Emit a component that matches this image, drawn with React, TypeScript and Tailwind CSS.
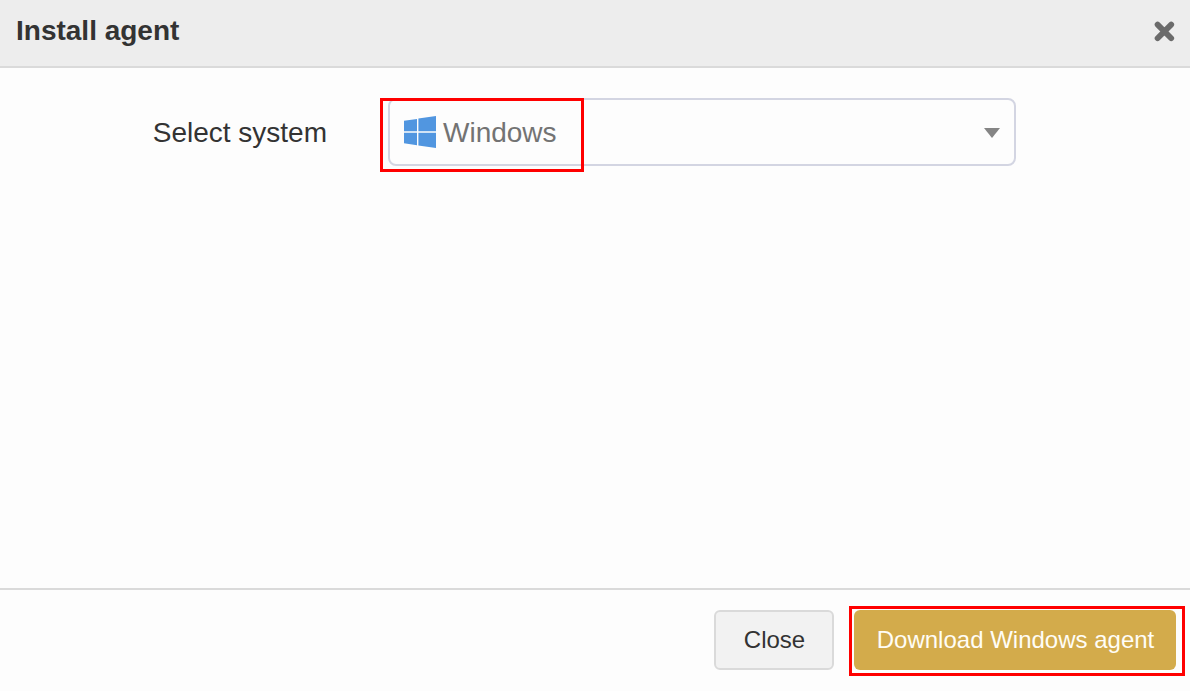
export default function App() {
  return (
    <div className="flex h-[691px] w-[1190px] flex-col overflow-hidden bg-[#fdfdfd] font-['Liberation_Sans',Arial,sans-serif] text-[#333333]">
      <header className="flex h-[68px] shrink-0 items-start justify-between border-b-2 border-[#dadada] bg-[#ededed] pl-4 pr-[15px]">
        <h1 className="pt-[15px] text-[28px] leading-[32px] font-bold">Install agent</h1>
        <button aria-label="Close dialog" className="mt-[21px]">
          <svg width="21" height="21" viewBox="0 0 21 21" className="block">
            <path d="M3.6 3.6L17.2 17.2M17.2 3.6L3.6 17.2" stroke="#6b6b6b" strokeWidth="5.8" strokeLinecap="round" />
          </svg>
        </button>
      </header>

      <main className="flex flex-1 items-start pt-[30px]">
        <label className="w-[327px] pt-[19px] text-right text-[28px] leading-[32px] whitespace-nowrap">Select system</label>
        <div className="relative ml-[61px] flex h-[68px] w-[628px] items-center rounded-lg border-2 border-[#d3d5e2] pl-[14px] pr-[14px]">
          <svg width="32" height="32" viewBox="0 0 32 32" className="block shrink-0" fill="#5196e0">
            <path d="M0 4.8L13 2.9V15.2H0ZM14.4 2.6L32 0V15.2H14.4ZM0 16.8H13V29.2L0 27.3ZM14.4 16.8H32V32L14.4 29.4Z" />
          </svg>
          <span className="mt-[2px] ml-[7px] text-[28px] leading-[32px] text-[#737373]">Windows</span>
          <svg width="16" height="10" viewBox="0 0 16 10" className="mt-[2px] ml-auto block" fill="#858585">
            <path d="M0 0H16L8 10Z" />
          </svg>
          <div className="pointer-events-none absolute -top-[2px] -left-[10px] h-[74px] w-[204px] border-[3px] border-[#ff0000]" />
        </div>
      </main>

      <footer className="flex h-[103px] shrink-0 items-start justify-end gap-5 border-t-2 border-[#dadada] pt-5 pr-[14px] text-[24px] leading-[28px]">
        <button className="h-[60px] w-[120px] rounded-md border-2 border-[#dadada] bg-[#f2f2f2] pl-px">Close</button>
        <div className="relative">
          <button className="block h-[60px] w-[322px] rounded-md bg-[#d3ab4b] pl-px whitespace-nowrap text-[#fffdf6]">Download Windows agent</button>
          <div className="pointer-events-none absolute -top-1 -left-[5px] h-[70px] w-[336px] border-[3px] border-[#ff0000]" />
        </div>
      </footer>
    </div>
  );
}
